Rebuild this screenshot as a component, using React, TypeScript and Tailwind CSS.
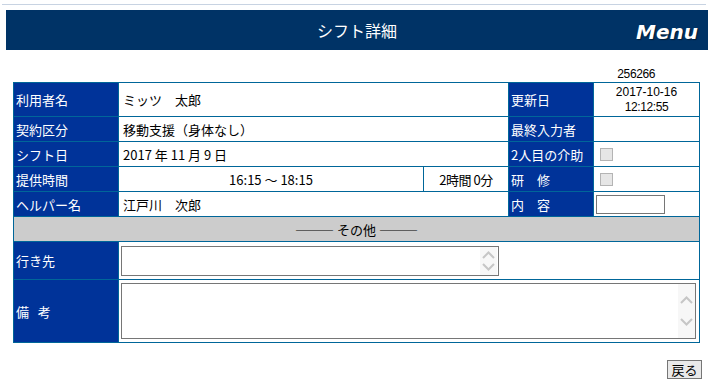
import React from "react";

const FONT = { fontFamily: '"Noto Sans CJK JP", "Liberation Sans", sans-serif' };

function Scroll({ gap }: { gap: string }) {
  return (
    <div className={`w-[17px] bg-[#f7f7f7] flex flex-col items-center justify-center ${gap}`}>
      <svg width="13" height="8" viewBox="0 0 13 8">
        <polyline points="1,7 6.5,1.5 12,7" fill="none" stroke="#c6c6c6" strokeWidth="2" />
      </svg>
      <svg width="13" height="8" viewBox="0 0 13 8">
        <polyline points="1,1 6.5,6.5 12,1" fill="none" stroke="#c6c6c6" strokeWidth="2" />
      </svg>
    </div>
  );
}

export default function App() {
  const lab = "border border-[#006699] bg-[#003399] text-white pl-[2px] align-middle whitespace-nowrap";
  const val = "border border-[#006699] bg-white text-black align-middle whitespace-nowrap";
  return (
    <div className="w-[708px] h-[385px] bg-white text-[13px] leading-none" style={FONT}>
      <div className="pt-[4px] pl-[2px] pr-[2px]">
        <div className="h-px bg-[#c8d3e2]" />
      </div>
      <div className="mt-[5px] ml-[6px] h-[40px] bg-[#003366] grid grid-cols-[1fr_auto_1fr] items-center text-white">
        <div />
        <div className="text-[16px]">シフト詳細</div>
        <div className="justify-self-end pr-[10px] pt-[4px]">
          <span
            className="text-[20px] font-bold italic"
            style={{ fontFamily: '"DejaVu Sans", sans-serif', textShadow: "1px 1px 1px #001a33" }}
          >
            Menu
          </span>
        </div>
      </div>
      <div className="ml-[13px] w-[686px] h-[32px] flex items-end justify-end pr-[44px] pb-[2px]">
        <span className="text-[12px] tracking-[-0.4px]" style={{ fontFamily: '"Liberation Sans", sans-serif' }}>256266</span>
      </div>
      <table className="ml-[13px] w-[686px] table-fixed border-collapse border border-[#006699]">
        <colgroup>
          <col className="w-[105px]" />
          <col className="w-[305px]" />
          <col className="w-[85px]" />
          <col className="w-[85px]" />
          <col className="w-[106px]" />
        </colgroup>
        <tbody>
          <tr className="h-[34px]">
            <td className={lab}>利用者名</td>
            <td className={`${val} pl-[4px]`} colSpan={2}>ミッツ　太郎</td>
            <td className={lab}>更新日</td>
            <td className={`${val} text-center text-[12px] leading-[15px]`} style={{ fontFamily: '"Liberation Sans", sans-serif' }}>
              <div>2017-10-16</div>
              <div className="tracking-[-0.4px]">12:12:55</div>
            </td>
          </tr>
          <tr className="h-[25px]">
            <td className={lab}>契約区分</td>
            <td className={`${val} pl-[4px]`} colSpan={2}>移動支援（身体なし）</td>
            <td className={lab}>最終入力者</td>
            <td className={val}></td>
          </tr>
          <tr className="h-[25px]">
            <td className={lab}>シフト日</td>
            <td className={`${val} pl-[4px]`} colSpan={2}>2017 年 11 月 9 日</td>
            <td className={lab}>2人目の介助</td>
            <td className={val}>
              <div className="ml-[6px] w-[13px] h-[13px] bg-[#e6e6e6] border border-[#b4b4b4]" />
            </td>
          </tr>
          <tr className="h-[25px]">
            <td className={lab}>提供時間</td>
            <td className={`${val} text-center`}>16:15 ～ 18:15</td>
            <td className={`${val} text-center tracking-[-0.5px]`}>2時間 0分</td>
            <td className={lab}>研　修</td>
            <td className={val}>
              <div className="ml-[6px] w-[13px] h-[13px] bg-[#e6e6e6] border border-[#b4b4b4]" />
            </td>
          </tr>
          <tr className="h-[25px]">
            <td className={lab}>ヘルパー名</td>
            <td className={`${val} pl-[4px]`} colSpan={2}>江戸川　次郎</td>
            <td className={lab}>内　容</td>
            <td className={val}>
              <div className="ml-[2px] w-[69px] h-[19px] border border-[#767676] bg-white" />
            </td>
          </tr>
          <tr className="h-[25px]">
            <td className="border border-[#006699] bg-[#cccccc] text-center align-middle" colSpan={5}>
              ――― その他 ―――
            </td>
          </tr>
          <tr className="h-[38px]">
            <td className={lab}>行き先</td>
            <td className={val} colSpan={4}>
              <div className="ml-[2px] w-[378px] h-[30px] border border-[#767676] bg-white flex">
                <div className="flex-1" />
                <Scroll gap="gap-[4px] mr-[1px]" />
              </div>
            </td>
          </tr>
          <tr className="h-[63px]">
            <td className={lab}>備&nbsp;&nbsp;&nbsp;考</td>
            <td className={val} colSpan={4}>
              <div className="ml-[2px] w-[575px] h-[56px] border border-[#767676] bg-white flex">
                <div className="flex-1" />
                <Scroll gap="gap-[14px]" />
              </div>
            </td>
          </tr>
        </tbody>
      </table>
      <div className="mt-[17px] flex justify-end pr-[6px]">
        <button className="w-[35px] h-[19px] bg-[#e9e9e9] border border-[#767676] text-[13px] leading-none text-black flex items-center justify-center">
          戻る
        </button>
      </div>
    </div>
  );
}
